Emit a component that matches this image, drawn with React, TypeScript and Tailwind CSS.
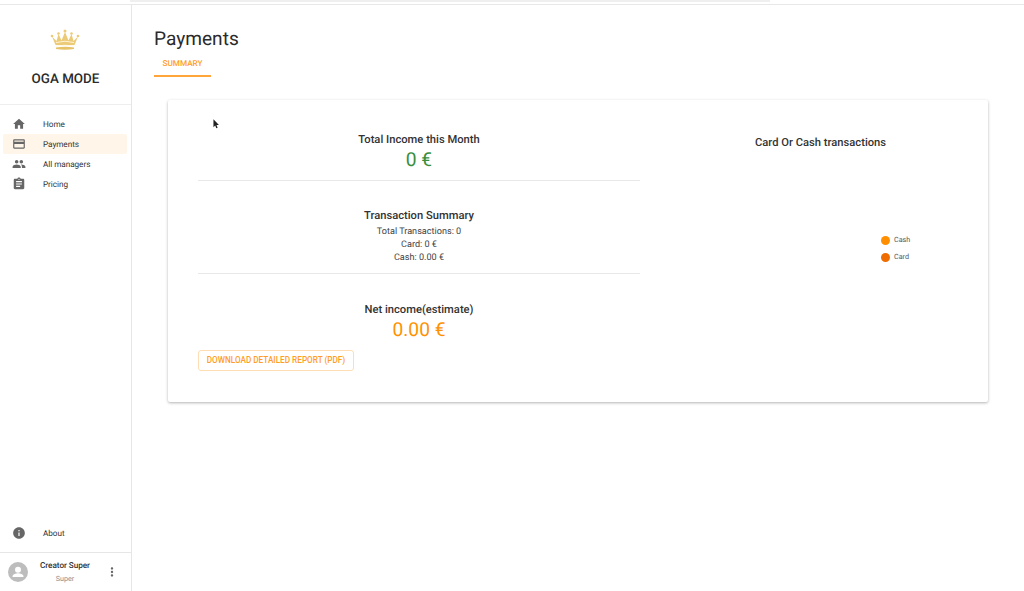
import type { ReactNode } from "react";

const paths = {
  home: "M10 20v-6h4v6h5v-8h3L12 3 2 12h3v8z",
  card: "M20 4H4c-1.11 0-1.99.89-1.99 2L2 18c0 1.11.89 2 2 2h16c1.11 0 2-.89 2-2V6c0-1.11-.89-2-2-2zm0 14H4v-6h16v6zm0-10H4V6h16v2z",
  people:
    "M16 11c1.66 0 2.99-1.34 2.99-3S17.66 5 16 5c-1.66 0-3 1.34-3 3s1.34 3 3 3zm-8 0c1.66 0 2.99-1.34 2.99-3S9.66 5 8 5C6.34 5 5 6.34 5 8s1.34 3 3 3zm0 2c-2.33 0-7 1.17-7 3.5V19h14v-2.5c0-2.33-4.67-3.5-7-3.5zm8 0c-.29 0-.62.02-.97.05 1.16.84 1.97 1.97 1.97 3.45V19h6v-2.5c0-2.33-4.67-3.5-7-3.5z",
  assignment:
    "M19 3h-4.18C14.4 1.84 13.3 1 12 1c-1.3 0-2.4.84-2.82 2H5c-1.1 0-2 .9-2 2v14c0 1.1.9 2 2 2h14c1.1 0 2-.9 2-2V5c0-1.1-.9-2-2-2zm-7 0c.55 0 1 .45 1 1s-.45 1-1 1-1-.45-1-1 .45-1 1-1zm2 14H7v-2h7v2zm3-4H7v-2h10v2zm0-4H7V7h10v2z",
  info: "M12 2C6.48 2 2 6.48 2 12s4.48 10 10 10 10-4.48 10-10S17.52 2 12 2zm1 15h-2v-6h2v6zm0-8h-2V7h2v2z",
  more: "M12 8c1.1 0 2-.9 2-2s-.9-2-2-2-2 .9-2 2 .9 2 2 2zm0 2c-1.1 0-2 .9-2 2s.9 2 2 2 2-.9 2-2-.9-2-2-2zm0 6c-1.1 0-2 .9-2 2s.9 2 2 2 2-.9 2-2-.9-2-2-2z",
};

const navItems = [
  { label: "Home", icon: paths.home },
  { label: "Payments", icon: paths.card, active: true },
  { label: "All managers", icon: paths.people },
  { label: "Pricing", icon: paths.assignment },
];

function Icon({ d, className }: { d: string; className?: string }) {
  return (
    <svg viewBox="0 0 24 24" fill="currentColor" className={className}>
      <path d={d} />
    </svg>
  );
}

function NavRow({ label, icon, active }: { label: string; icon: string; active?: boolean }) {
  return (
    <div
      className={`flex h-5 items-center rounded-[2px] pl-[9px] ${active ? "bg-[#fff5e9]" : ""}`}
    >
      <Icon d={icon} className="h-[14px] w-[14px] text-[#666666]" />
      <span className="ml-[16px] pt-[2px] pl-[1px] text-[8.2px] tracking-[-0.05px] text-[#333]">{label}</span>
    </div>
  );
}

function Crown() {
  return (
    <svg viewBox="0 0 30 22" className="h-[22px] w-[30px]">
      <g fill="#eccb78">
        <circle cx="2" cy="7" r="1.3" />
        <circle cx="8.5" cy="4.5" r="1.3" />
        <circle cx="15" cy="2" r="1.5" />
        <circle cx="21.5" cy="4.5" r="1.3" />
        <circle cx="28" cy="7" r="1.3" />
        <path d="M2 7.5l4.5 4.5 2-7 3 6.5 3.5-8.500 3.500 8.500 3-6.500 2 7 4.500-4.500-3.500 8.500h-19z" />
      </g>
      <path d="M6 13.500q9-2.500 18 0" stroke="#fff3d6" strokeWidth="1" fill="none" />
      <path d="M5.500 17q9.500-1.500 19 0" stroke="#fff3d6" strokeWidth=".7" fill="none" />
      <path d="M6 18.500q9-1.500 18 0v1.500q-9 1.500-18 0z" fill="#e6c268" />
    </svg>
  );
}

function Section({ title, children }: { title: string; children: ReactNode }) {
  return (
    <div className="flex flex-col items-center">
      <div className="pt-[1px] text-[11.2px] leading-[18px] font-medium text-[#333]">{title}</div>
      {children}
    </div>
  );
}

export default function App() {
  return (
    <div className="relative flex h-[591px] w-[1024px] flex-col overflow-hidden bg-white font-['Roboto',sans-serif] [text-rendering:geometricPrecision]">
      <div className="h-[5px] shrink-0 border-b border-[#e8e8e8]">
        <div className="ml-[130px] h-[2px] w-[640px] bg-[#efefef]" />
      </div>

      <div className="flex min-h-0 flex-1">
        <aside className="flex w-[132px] shrink-0 flex-col border-r border-[#e6e6e6]">
          <div className="flex h-[100px] flex-col items-center border-b border-[#eeeeee] pt-[24px]">
            <div className="-ml-[1px]">
              <Crown />
            </div>
            <div className="mt-[19px] text-[13.4px] leading-[20px] font-medium text-[#2b2b2b]">OGA MODE</div>
          </div>
          <nav className="flex flex-col pt-[9px] pr-[4px] pl-[3px]">
            {navItems.map((item) => (
              <NavRow key={item.label} {...item} />
            ))}
          </nav>
          <div className="mt-auto flex h-[38px] items-center pl-[12px]">
            <Icon d={paths.info} className="h-[14px] w-[14px] text-[#666666]" />
            <span className="ml-[17px] pt-[2px] text-[8.2px] tracking-[-0.05px] text-[#333]">About</span>
          </div>
          <div className="flex h-[39px] items-center border-t border-[#e6e6e6] pl-[8px]">
            <svg viewBox="0 0 20 20" className="h-[20px] w-[20px] shrink-0">
              <circle cx="10" cy="10" r="10" fill="#bdbdbd" />
              <circle cx="10" cy="7.700" r="3" fill="#fff" />
              <path d="M4.500 14.500c0-2.200 3.500-3.300 5.500-3.300s5.500 1.100 5.500 3.300v.5h-11z" fill="#fff" />
            </svg>
            <div className="ml-[12px] flex w-[50px] flex-col items-center">
              <span className="text-[8.2px] leading-[13px] font-medium tracking-[-0.05px] whitespace-nowrap text-[#333]">Creator Super</span>
              <span className="mt-[1px] text-[7.2px] leading-[10px] text-[#8a8a8a]">Super</span>
            </div>
            <Icon d={paths.more} className="ml-[15px] h-[14px] w-[14px] text-[#666666]" />
          </div>
        </aside>

        <main className="min-w-0 flex-1 pt-[21px]">
          <h1 className="pl-[22px] text-[19.1px] leading-[26px] text-[#2b2b2b]">Payments</h1>
          <div className="ml-[22px] flex h-[25px] w-[57px] items-center justify-center border-b-2 border-[#ffa53a] pt-[1px]">
            <span className="text-[8.2px] font-medium text-[#ff9d26]">SUMMARY</span>
          </div>

          <section className="mt-[23px] ml-[36px] flex h-[302px] w-[820px] rounded-[2px] bg-white pt-[30px] pl-[30px] shadow-[0_1px_3px_rgba(0,0,0,0.3)]">
            <div className="flex w-[442px] flex-col">
              <div className="h-[51px] border-b border-[#e8e8e8]">
                <Section title="Total Income this Month">
                  <div className="text-[19.2px] leading-[22px] text-[#388e3c]">0 €</div>
                </Section>
              </div>
              <div className="mt-[25px] h-[68px] border-b border-[#e8e8e8]">
                <Section title="Transaction Summary">
                  <div className="mt-[1px] text-center text-[9.1px] leading-[13px] text-[#444]">
                    <div>Total Transactions: 0</div>
                    <div>Card: 0 €</div>
                    <div>Cash: 0.00 €</div>
                  </div>
                </Section>
              </div>
              <div className="mt-[26px]">
                <Section title="Net income(estimate)">
                  <div className="-mt-[1px] text-[19.2px] leading-[23px] text-[#ff9100]">0.00 €</div>
                </Section>
              </div>
              <button className="mt-[9px] h-[21px] w-[156px] rounded-[3px] border border-[#ffddb3] text-[8.2px] font-medium whitespace-nowrap text-[#ff9d26]">
                DOWNLOAD DETAILED REPORT (PDF)
              </button>
            </div>

            <div className="flex-1 pt-[4px]">
              <div className="ml-[115px] text-[11.2px] leading-[18px] font-medium text-[#333]">Card Or Cash transactions</div>
              <div className="mt-[84px] ml-[241px] flex flex-col gap-[8px]">
                <div className="flex h-[9px] items-center">
                  <span className="h-[9px] w-[9px] rounded-full bg-[#ff8f00]" />
                  <span className="ml-[4px] text-[7.2px] text-[#555]">Cash</span>
                </div>
                <div className="flex h-[9px] items-center">
                  <span className="h-[9px] w-[9px] rounded-full bg-[#ef6c00]" />
                  <span className="ml-[4px] text-[7.2px] text-[#555]">Card</span>
                </div>
              </div>
            </div>
          </section>
        </main>
      </div>

      {/* mouse pointer caught in the screenshot */}
      <svg viewBox="0 0 8 12" className="absolute top-[119px] left-[213px] h-[11px] w-[7px]">
        <path d="M0.500 0v9l2-1.800 1.300 3.200 1.500-.6-1.300-3.100h2.800z" fill="#222" />
      </svg>
    </div>
  );
}
